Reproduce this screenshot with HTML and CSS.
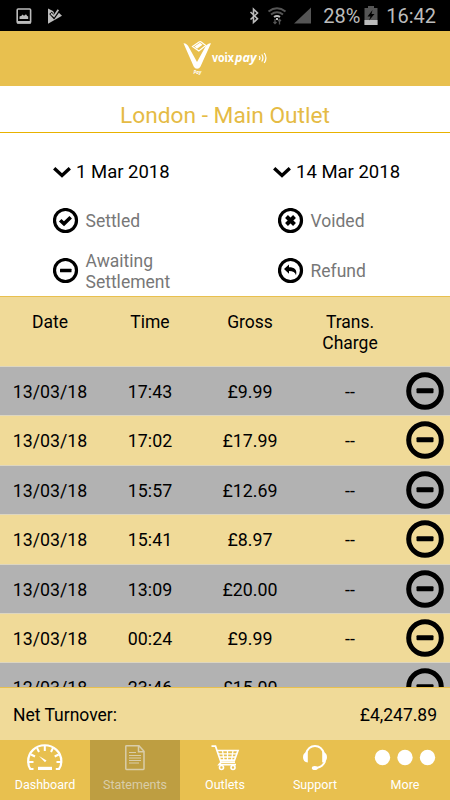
FILE: index.html
```html
<!DOCTYPE html>
<html lang="en">
<head>
  <meta charset="UTF-8">
  <meta name="viewport" content="width=device-width, initial-scale=1.0">
  <title>Voixpay - Statements</title>
  <link rel="stylesheet" href="styles.css">
</head>
<body>
<svg class="defs" width="0" height="0">
  <symbol id="minus" viewBox="0 0 38 38">
    <circle cx="19" cy="19" r="16.3" fill="none" stroke="#000" stroke-width="5"/>
    <rect x="10.5" y="16.3" width="17" height="5" rx="1"/>
  </symbol>
  <symbol id="chevron" viewBox="0 0 18 12">
    <path d="M1.2 2.2 9 9.4l7.8-7.2" fill="none" stroke="#000" stroke-width="3.4"/>
  </symbol>
</svg>
<div class="app">
  <div class="status">
    <svg class="status-left" width="50" height="20" viewBox="0 0 50 20">
      <rect x="1.2" y="3" width="13.4" height="14" rx="1" fill="none" stroke="#bcbcbc" stroke-width="1.6"/>
      <path d="M1 15h14v2.5H1zM3.5 13V10.5l2-.8 1-1.2 1.5 1.2 2-1.4 1.2 1.8 1 .4V13z" fill="#bcbcbc"/>
      <path d="M32 2.5 37 5l2 3.500 3-2.500 4 3.8L32 17.700z" fill="#bcbcbc"/>
      <path d="m34.500 6.800 3.500 4 5-7" fill="none" stroke="#000" stroke-width="3.500"/>
      <path d="m35 7.500 3 2.700 4.300-6.400" fill="none" stroke="#bcbcbc" stroke-width="1.800"/>
    </svg>
    <div class="status-right">
      <svg width="66" height="20" viewBox="0 0 66 20">
        <path d="m2.500 6 7 6.700-4 3.800V3.200l4 3.800-7 6.500" fill="none" stroke="#bcbcbc" stroke-width="1.600"/>
        <g fill="none" stroke="#555" stroke-width="2">
          <path d="M20.500 5.500q8.500-6.500 17 0M23 8.500q6-4.500 12 0"/>
          <path d="M26 11q3-2 6 0M28 13h2" stroke="#bcbcbc"/>
          <path d="M27 18v-5M25.500 16l1.500 1.500 1.500-1.500M31.500 13.500v5M30 15l1.500-1.500 1.500 1.500" stroke-width="1.300"/>
        </g>
        <path d="M63 1.500v16H46z" fill="#555"/>
      </svg>
      <span class="percent">28%</span>
      <svg class="battery" width="14" height="20" viewBox="0 0 14 20">
        <path d="M.5 2H4V0h6v2h3.500v17H.5z" fill="#555"/>
        <path d="M.5 14h13v5H.5z" fill="#bcbcbc"/>
        <path d="M8.500 4 3.500 10.500h3L5 14.500l5.500-6.500h-3z" fill="#000"/>
      </svg>
      <span class="clock">16:42</span>
    </div>
  </div>

  <div class="header">
    <svg width="90" height="40" viewBox="0 0 90 40">
      <path d="M3.500 5.300q3.800.2 5.500 4.200l8 14.500 8-14.500q1.700-4 6-4.200L20.500 28.500q-1.200 2.300-3.400 2.300t-3.400-2.300z" fill="#fff"/>
      <path d="m12.500 8.500 6.500-4.500q1.500-.8 2.500.2l4.300 3.300-7 5.500z" fill="none" stroke="#fff" stroke-width="1.200"/>
      <path d="m14.500 8.500 5.500-3.800 2.500 2-5.500 4z" fill="#fff"/>
      <text x="13.500" y="36" class="logo-pay">Pay</text>
      <text x="32" y="23.500" class="logo-name" textLength="22" lengthAdjust="spacingAndGlyphs">voix</text>
      <text x="55" y="23.500" class="logo-name italic" textLength="21.500" lengthAdjust="spacingAndGlyphs">pay</text>
      <path d="M79.200 18q1.600 2 0 4M81.700 16.500q2.500 3.500 0 7M84.200 15q3.500 5 0 10" fill="none" stroke="#fff" stroke-width="1.200"/>
    </svg>
  </div>

  <div class="title">London - Main Outlet</div>

  <div class="filters">
    <div class="dates">
      <div class="date"><svg width="18" height="12"><use href="#chevron"/></svg>1 Mar 2018</div>
      <div class="date"><svg width="18" height="12"><use href="#chevron"/></svg>14 Mar 2018</div>
    </div>
    <div class="legend">
      <div class="key">
        <svg width="26" height="26" viewBox="0 0 26 26"><circle cx="12.500" cy="12.500" r="11" fill="none" stroke="#000" stroke-width="3.200"/><path d="m7.200 12.200 3.800 3.600 6.700-6.600" fill="none" stroke="#000" stroke-width="3.600"/></svg>
        <span>Settled</span>
      </div>
      <div class="key">
        <svg width="26" height="26" viewBox="0 0 26 26"><circle cx="12.500" cy="12.500" r="11" fill="none" stroke="#000" stroke-width="3.200"/><path d="m8.500 8.500 8 8m0-8-8 8" fill="none" stroke="#000" stroke-width="4"/></svg>
        <span>Voided</span>
      </div>
      <div class="key">
        <svg width="26" height="26" viewBox="0 0 26 26"><circle cx="12.500" cy="12.500" r="11" fill="none" stroke="#000" stroke-width="3.200"/><rect x="7" y="10.800" width="11.500" height="3.400" rx=".5"/></svg>
        <span>Awaiting<br>Settlement</span>
      </div>
      <div class="key">
        <svg width="26" height="26" viewBox="0 0 26 26"><circle cx="12.500" cy="12.500" r="11" fill="none" stroke="#000" stroke-width="3.200"/><path d="m6 11 5-4.500v2.800c5.500 0 8.500 2.500 7 8-.8-3-3-4.300-7-4.300v2.700z"/></svg>
        <span>Refund</span>
      </div>
    </div>
  </div>

  <div class="table">
    <div class="head"><span>Date</span><span>Time</span><span>Gross</span><span>Trans.<br>Charge</span></div>
    <div class="row"><span>13/03/18</span><span>17:43</span><span>£9.99</span><span>--</span><svg><use href="#minus"/></svg></div>
    <div class="row"><span>13/03/18</span><span>17:02</span><span>£17.99</span><span>--</span><svg><use href="#minus"/></svg></div>
    <div class="row"><span>13/03/18</span><span>15:57</span><span>£12.69</span><span>--</span><svg><use href="#minus"/></svg></div>
    <div class="row"><span>13/03/18</span><span>15:41</span><span>£8.97</span><span>--</span><svg><use href="#minus"/></svg></div>
    <div class="row"><span>13/03/18</span><span>13:09</span><span>£20.00</span><span>--</span><svg><use href="#minus"/></svg></div>
    <div class="row"><span>13/03/18</span><span>00:24</span><span>£9.99</span><span>--</span><svg><use href="#minus"/></svg></div>
    <div class="row"><span>12/03/18</span><span>23:46</span><span>£15.00</span><span>--</span><svg><use href="#minus"/></svg></div>
  </div>

  <div class="total"><span>Net Turnover:</span><span>£4,247.89</span></div>

  <div class="tabs">
    <div class="tab">
      <svg width="36" height="28" viewBox="0 0 36 28">
        <path d="M6.500 25H3.300Q1 22 1.200 17a16.300 15.500 0 0 1 33.100 0q.1 5-2.300 8h-3.200" fill="none" stroke="#fff" stroke-width="2.200"/>
        <path d="M17.800 2v5M10 4l2 4M26 4l-2 4M4 10.500l4 2M31.700 10.500l-4 2M2 18h4.500M34 18h-4.500" stroke="#fff" stroke-width="2"/>
        <path d="m12 12 7.500 4.500-1.500 1.700z" fill="#fff"/>
        <rect x="11" y="22.800" width="14" height="3.200" fill="#fff"/>
      </svg>
      <span>Dashboard</span>
    </div>
    <div class="tab active">
      <svg width="36" height="28" viewBox="0 0 36 28">
        <path d="M9.500 1.700h12.500l5 5.500v17.500q0 .7-.7.700H9.500q-.7 0-.7-.7V2.400q0-.7.700-.7zM21.500 1.700v6H27" fill="none" stroke="#d9cda9" stroke-width="1.500"/>
        <path d="M12 8.500h7M12 11.500h12M12 14h12M12 16.500h12M12 19h10" stroke="#d9cda9" stroke-width="1.200"/>
      </svg>
      <span>Statements</span>
    </div>
    <div class="tab">
      <svg width="36" height="28" viewBox="0 0 36 28">
        <path d="M4.500 2.200h4l5.500 16h14M9.500 6.500h21.500l-3.500 9.700H13.500M14 18.200l-2 2.500h17" fill="none" stroke="#fff" stroke-width="1.700"/>
        <path d="M11 9.800h19M12.500 13h16M15.500 6.500l1.500 10M20.500 6.500v10M26 6.500l-1.500 10" stroke="#fff" stroke-width="1.300"/>
        <circle cx="14.500" cy="23.500" r="2" fill="none" stroke="#fff" stroke-width="1.600"/><circle cx="26" cy="23.500" r="2" fill="none" stroke="#fff" stroke-width="1.600"/>
      </svg>
      <span>Outlets</span>
    </div>
    <div class="tab">
      <svg width="36" height="28" viewBox="0 0 36 28">
        <path d="M8.800 10C10.500 4.500 13.500 2 18 2s7.500 2.500 9.200 8M28 17q-1.500 5.500-8.500 7" fill="none" stroke="#fff" stroke-width="2"/>
        <path d="M10.800 8v10.500Q6 18 6 13.200T10.800 8zM25.200 8v10.500q4.800-.5 4.800-5.300T25.200 8z" fill="#fff"/>
        <ellipse cx="17.800" cy="24" rx="3" ry="2.100" fill="#fff"/>
      </svg>
      <span>Support</span>
    </div>
    <div class="tab">
      <svg width="62" height="28" viewBox="0 0 62 28"><g fill="#fff"><circle cx="8.500" cy="13.500" r="7.700"/><circle cx="31" cy="13.500" r="7.700"/><circle cx="53.500" cy="13.500" r="7.700"/></g></svg>
      <span>More</span>
    </div>
  </div>
</div>
</body>
</html>
```
FILE: styles.css
```css
body {
    margin: 0;
    font-family: Roboto, sans-serif;
    font-size: 17.5px;
    color: #000;
    background-color: #fff;
}
.defs {
    display: block;
}
.app {
    display: flex;
    flex-direction: column;
    width: 450px;
    height: 800px;
    overflow: hidden;
}
.status {
    display: flex;
    justify-content: space-between;
    flex: none;
    height: 31px;
    box-sizing: border-box;
    padding: 6px 14px 0 16px;
    background-color: #000;
    color: #bcbcbc;
    font-size: 20px;
    line-height: 20px;
}
.status-right {
    display: flex;
}
.percent {
    width: 38px;
    margin-left: 9px;
}
.battery {
    margin: 0 8px 0 3px;
}
.header {
    display: flex;
    justify-content: center;
    flex: none;
    height: 55px;
    box-sizing: border-box;
    padding-top: 7px;
    background-color: #e8c04f;
}
.logo-name {
    font: bold 13px "Open Sans", sans-serif;
    fill: #fff;
}
.logo-name.italic {
    font-style: italic;
}
.logo-pay {
    font: italic bold 4.5px "Open Sans", sans-serif;
    fill: #fff;
}
.title {
    flex: none;
    height: 46px;
    line-height: 60px;
    border-bottom: 1px solid #e8b200;
    color: #e5bb45;
    font-size: 22.7px;
    text-align: center;
}
.filters {
    flex: none;
    height: 163px;
}
.dates {
    display: grid;
    grid-template-columns: 220px 1fr;
    padding: 28px 0 0 53px;
    font-size: 18.5px;
    line-height: 22px;
}
.date {
    display: flex;
    align-items: center;
    gap: 5px;
}
.legend {
    display: grid;
    grid-template-columns: 225px 1fr;
    grid-template-rows: 50px 50px;
    padding: 13px 0 0 53px;
    color: #777;
    line-height: 20.5px;
}
.key {
    display: flex;
    align-items: center;
    gap: 6.5px;
}
.key span {
    padding-top: 1px;
}
.table {
    flex: 1;
    overflow: hidden;
    border-top: 1px solid #e8c04f;
    background-color: #f0da98;
}
.head, .row {
    display: grid;
    grid-template-columns: repeat(4, 100px) 50px;
    text-align: center;
}
.head {
    height: 69px;
    box-sizing: border-box;
    padding-top: 15px;
    line-height: 20.5px;
}
.row {
    height: 49.4px;
    box-sizing: border-box;
    border-top: 1px solid #ddd6c0;
    font-size: 17.8px;
    line-height: 50px;
}
.row:nth-child(even) {
    background-color: #b2b2b2;
}
.row svg {
    width: 38px;
    height: 38px;
    margin: 5px 0 0 6px;
}
.total {
    display: flex;
    justify-content: space-between;
    flex: none;
    height: 52px;
    padding: 0 13px;
    border-top: 1px solid #e8c04f;
    line-height: 54px;
    background-color: #f0da98;
}
.tabs {
    display: flex;
    flex: none;
    height: 60px;
    background-color: #e8c04f;
}
.tab {
    display: flex;
    flex-direction: column;
    align-items: center;
    width: 90px;
    padding-top: 4px;
    box-sizing: border-box;
    color: #fff;
    font-size: 12.5px;
    line-height: 26px;
}
.tab.active {
    background-color: #be9e41;
    color: #d9cda9;
}
```
